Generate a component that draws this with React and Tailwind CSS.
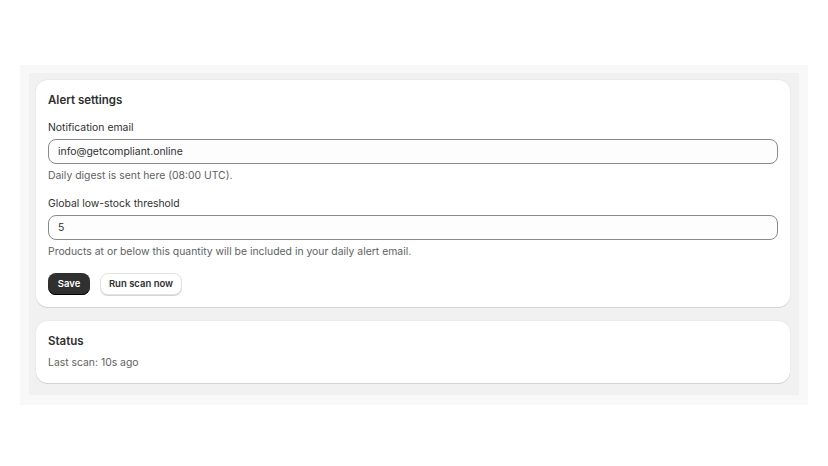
import React from "react";

const font = { fontFamily: "Inter, 'Liberation Sans', sans-serif" };

const Field = ({ label, value, help }) => (
  <div>
    <div className="text-[10.4px] leading-4 text-[#303030]">{label}</div>
    <div className="mt-[3px] h-[25px] rounded-lg border border-[#8a8a8a] bg-[#fdfdfd] px-[9px] flex items-center text-[10.4px] text-[#303030]">
      {value}
    </div>
    <div className="mt-1 text-[10.4px] leading-4 text-[#616161]">{help}</div>
  </div>
);

export default function App() {
  return (
    <div className="min-h-screen bg-white pt-[65px]" style={font}>
      <div className="mx-[20px] w-[788px] bg-[#f8f8f8] pt-2 pb-[10px] pl-[9px] pr-[9px]">
        <div className="bg-[#f1f1f1] pt-[7px] pb-3 pl-[7px] pr-[9px] flex flex-col gap-[14px]">
          {/* Alert settings card */}
          <div className="bg-white rounded-xl shadow-[0_1px_0_0_#d4d4d4,0_0_0_1px_#ebebeb] px-3 pt-3 pb-3">
            <h2 className="text-[11.5px] leading-4 font-semibold text-[#303030]">Alert settings</h2>
            <div className="mt-3">
              <Field
                label="Notification email"
                value="info@getcompliant.online"
                help="Daily digest is sent here (08:00 UTC)."
              />
            </div>
            <div className="mt-3">
              <Field
                label="Global low-stock threshold"
                value="5"
                help="Products at or below this quantity will be included in your daily alert email."
              />
            </div>
            <div className="mt-[13px] flex items-center gap-[10px]">
              <button className="h-[22px] w-[42px] rounded-lg bg-[#303030] text-white text-[9.5px] font-semibold shadow-[inset_0_-1px_0_#000]">
                Save
              </button>
              <button className="h-[22px] w-[82px] rounded-lg bg-white text-[#303030] text-[9.5px] font-semibold border border-[#e3e3e3] shadow-[0_1px_0_#d4d4d4]">
                Run scan now
              </button>
            </div>
          </div>

          {/* Status card */}
          <div className="bg-white rounded-xl shadow-[0_1px_0_0_#d4d4d4,0_0_0_1px_#ebebeb] px-3 pt-3 pb-3">
            <h2 className="text-[11.5px] leading-4 font-semibold text-[#303030]">Status</h2>
            <div className="mt-[6px] text-[10.4px] leading-4 text-[#616161]">Last scan: 10s ago</div>
          </div>
        </div>
      </div>
    </div>
  );
}
